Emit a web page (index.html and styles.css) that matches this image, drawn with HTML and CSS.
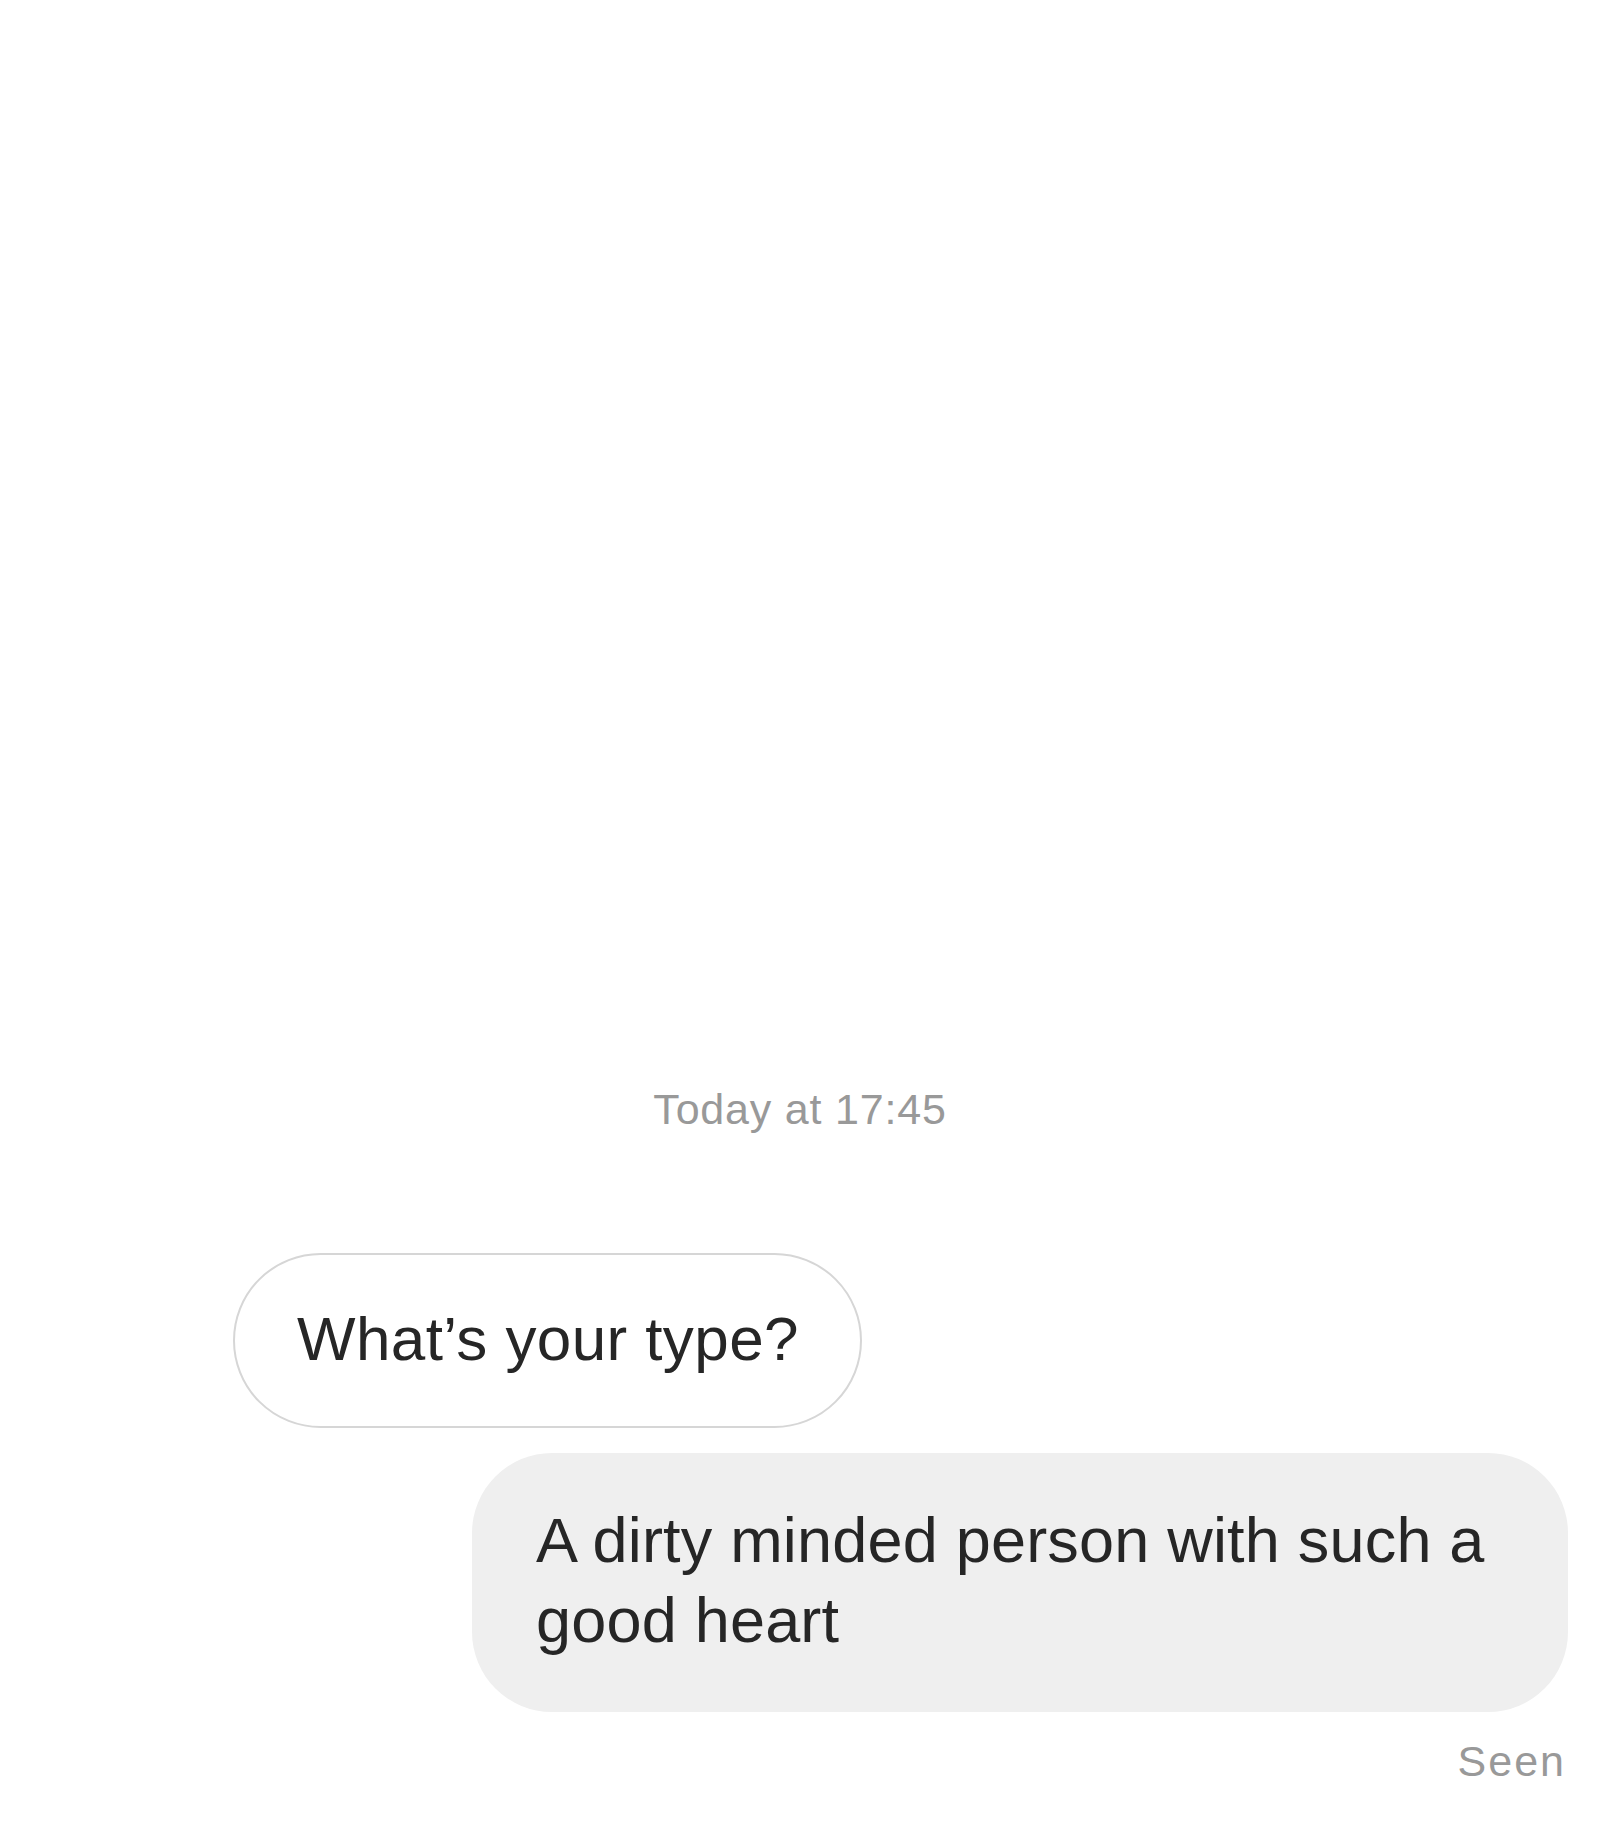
FILE: index.html
```html
<!DOCTYPE html>
<html lang="en">
<head>
    <meta charset="UTF-8">
    <meta name="viewport" content="width=device-width, initial-scale=1.0">
    <title>Direct</title>
    <link rel="stylesheet" href="styles.css">
</head>
<body>
    <div class="thread">
        <div class="timestamp">Today at 17:45</div>
        <div class="message incoming">
            <div class="bubble">What’s your type?</div>
        </div>
        <div class="message outgoing">
            <div class="bubble">A dirty minded person with such a good heart</div>
        </div>
        <div class="status">Seen</div>
    </div>
</body>
</html>
```

FILE: styles.css
```css
body {
    margin: 0;
    background-color: #fff;
    font-family: "Liberation Sans", Arial, sans-serif;
    color: #262626;
}
.thread {
    min-height: 100vh;
    box-sizing: border-box;
    display: flex;
    flex-direction: column;
    justify-content: flex-end;
    padding: 0 32px 58px 233px;
}
.timestamp {
    font-size: 43px;
    line-height: 52px;
    letter-spacing: 0.8px;
    color: #999;
    text-align: center;
    margin: 0 -32px 118px -233px;
}
.message {
    display: flex;
}
.message.outgoing {
    justify-content: flex-end;
    margin-top: 25px;
}
.bubble {
    font-size: 63px;
    line-height: 80px;
    letter-spacing: 0.2px;
    box-sizing: border-box;
}
.incoming .bubble {
    font-size: 62px;
    letter-spacing: 0.4px;
    border: 2px solid #d6d6d6;
    border-radius: 88px;
    padding: 44px 61px 47px 62px;
}
.outgoing .bubble {
    background-color: #efefef;
    border-radius: 80px;
    padding: 47px 60px 52px 64px;
    max-width: 1096px;
}
.status {
    font-size: 43px;
    line-height: 52px;
    letter-spacing: 2px;
    color: #999;
    text-align: right;
    margin-top: 23px;
    padding-right: 2px;
}
```
